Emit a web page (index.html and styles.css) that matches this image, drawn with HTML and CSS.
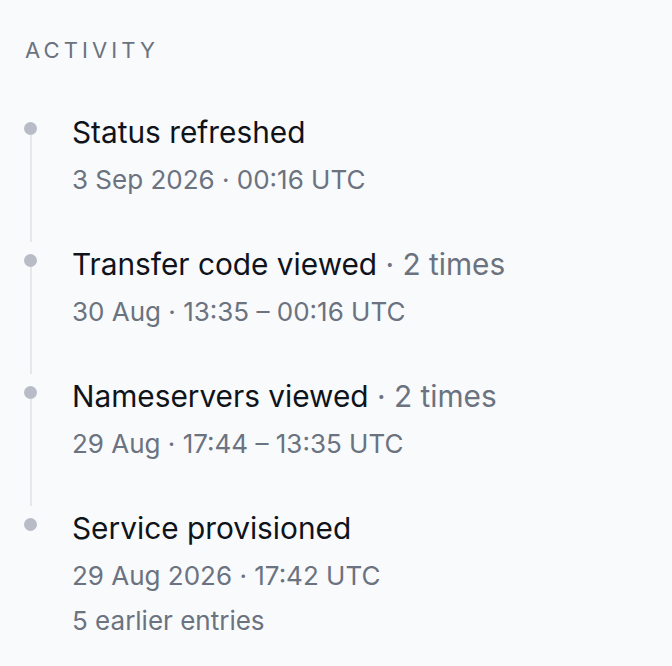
FILE: index.html
```html
<!DOCTYPE html>
<html lang="en">
<head>
<meta charset="utf-8">
<title>Activity</title>
<link rel="stylesheet" href="styles.css">
</head>
<body>
<section class="panel">
  <h2 class="heading">ACTIVITY</h2>
  <ol class="timeline">
    <li class="item">
      <div class="marker"><span class="dot"></span><span class="line"></span></div>
      <div class="content">
        <div class="title">Status refreshed</div>
        <div class="meta">3 Sep 2026 · 00:16 UTC</div>
      </div>
    </li>
    <li class="item">
      <div class="marker"><span class="dot"></span><span class="line"></span></div>
      <div class="content">
        <div class="title">Transfer code viewed <span class="count">· 2 times</span></div>
        <div class="meta">30 Aug · 13:35 – 00:16 UTC</div>
      </div>
    </li>
    <li class="item">
      <div class="marker"><span class="dot"></span><span class="line"></span></div>
      <div class="content">
        <div class="title">Nameservers viewed <span class="count">· 2 times</span></div>
        <div class="meta">29 Aug · 17:44 – 13:35 UTC</div>
      </div>
    </li>
    <li class="item item-last">
      <div class="marker"><span class="dot"></span></div>
      <div class="content">
        <div class="title">Service provisioned</div>
        <div class="meta">29 Aug 2026 · 17:42 UTC</div>
        <div class="meta extra">5 earlier entries</div>
      </div>
    </li>
  </ol>
</section>
</body>
</html>
```

FILE: styles.css
```css
html, body {
  margin: 0;
  padding: 0;
  background: #f9fafb;
}

body {
  font-family: Inter, "Noto Sans", "Liberation Sans", sans-serif;
  color: #111827;
}

.panel {
  padding: 36px 24px 0 24px;
}

.heading {
  margin: 0 0 50px 0;
  font-size: 22px;
  line-height: 28px;
  font-weight: 400;
  letter-spacing: 4.1px;
  color: #6b7280;
  padding-left: 1px;
}

.timeline {
  list-style: none;
  margin: 0;
  padding: 0;
}

.item {
  display: grid;
  grid-template-columns: 48px 1fr;
  padding-bottom: 50px;
}

.item-last {
  padding-bottom: 0;
}

.marker {
  display: flex;
  flex-direction: column;
  align-items: flex-start;
  margin-bottom: -46px;
}

.item-last .marker {
  margin-bottom: 0;
}

.dot {
  width: 13px;
  height: 13px;
  margin-top: 8px;
  border-radius: 50%;
  background: #b8bcc7;
}

.line {
  flex: 1;
  width: 2px;
  margin-left: 5.5px;
  background: #e5e7eb;
}

.title {
  font-size: 29.8px;
  line-height: 36px;
  color: #0f131a;
}

.count {
  color: #6b7280;
}

.meta {
  margin-top: 14px;
  font-size: 26px;
  line-height: 32px;
  color: #6b7280;
}

.meta.extra {
  margin-top: 13px;
}
```
